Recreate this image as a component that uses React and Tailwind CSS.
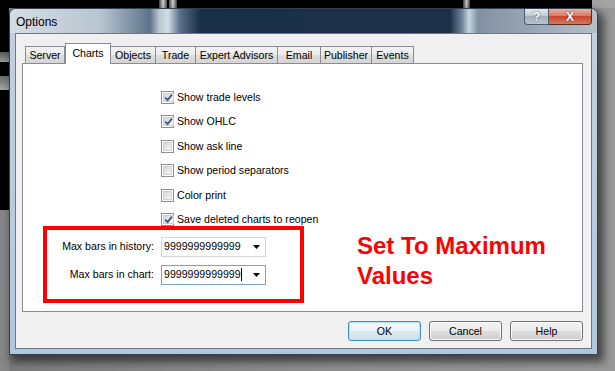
import React from "react";

const TABS = [
  { label: "Server", w: "w-[40px]" },
  { label: "Charts", w: "w-[46px]", active: true },
  { label: "Objects", w: "w-[46px]" },
  { label: "Trade", w: "w-[41px]" },
  { label: "Expert Advisors", w: "w-[83px]" },
  { label: "Email", w: "w-[44px]" },
  { label: "Publisher", w: "w-[52px]" },
  { label: "Events", w: "w-[43px]" },
];

const OPTIONS = [
  { label: "Show trade levels", checked: true },
  { label: "Show OHLC", checked: true },
  { label: "Show ask line", checked: false },
  { label: "Show period separators", checked: false },
  { label: "Color print", checked: false },
  { label: "Save deleted charts to reopen", checked: true },
];

function CheckBox({ checked }) {
  return (
    <span className="w-[13px] h-[13px] shrink-0 border border-[#8f8f8f] bg-white p-px flex">
      <span className="flex-1 flex items-center justify-center border border-[#cfcfcf] bg-[linear-gradient(135deg,#d6d6d6,#f7f7f7)]">
        {checked && (
          <svg width="9" height="9" viewBox="0 0 9 9">
            <path d="M1.2 4.6 L3.6 7 L7.9 1.6" fill="none" stroke="#3f5793" strokeWidth="1.9" />
          </svg>
        )}
      </span>
    </span>
  );
}

function Combo({ focused }) {
  return (
    <div
      className={`w-[105px] h-[20px] flex items-center bg-white border ${
        focused ? "border-[#7da2ce]" : "border-[#d5d5d5]"
      }`}
    >
      <span className="flex-1 flex items-center pl-[2px] text-[10.6px] leading-[13px] text-black">
        9999999999999
        {focused && <span className="w-px h-[13px] bg-black" />}
      </span>
      <svg className="mr-[5px]" width="7" height="4" viewBox="0 0 7 4">
        <path d="M0 0 H7 L3.5 4 Z" fill="#000" />
      </svg>
    </div>
  );
}

function DialogButton({ children, primary }) {
  return (
    <button
      className={`w-[73px] h-[20px] rounded-[3px] border text-[10.6px] text-black leading-none ${
        primary
          ? "border-[#3c8fc8] shadow-[inset_0_0_0_1px_#b5e2f8] bg-[linear-gradient(180deg,#f4f9fc_0%,#e9f3f9_50%,#dbe9f2_50%,#cfe1ec_100%)]"
          : "border-[#707070] shadow-[inset_0_0_0_1px_#fbfbfb] bg-[linear-gradient(180deg,#f2f2f2_0%,#ebebeb_50%,#dddddd_50%,#cfcfcf_100%)]"
      }`}
    >
      {children}
    </button>
  );
}

function TitleBar() {
  return (
    <div className="h-[24px] shrink-0 flex items-start bg-[linear-gradient(90deg,#d4dce4_0px,#b9c6d2_90px,#5d7289_140px,#b7c6d4_149px,#d3dde6_158px,#5a7089_170px,#1a2f48_190px,#1c3149_440px,#6f8399_452px,#c8d5e1_459px,#7f91a4_468px,#8a98a7_485px,#b4bfca_587px)]">
      <span className="pl-[6px] pt-[6px] text-[12px] leading-[14px] text-black">Options</span>
      <div className="ml-auto mr-[5px] flex">
        <div className="w-[25px] h-[16px] rounded-bl-[4px] border border-[#4d5c6c] border-t-0 bg-[linear-gradient(180deg,#e4e9ee,#bcc6d1_50%,#a3afbc_50%,#b9c4cf)] flex items-center justify-center text-[12px] font-bold text-white leading-none [text-shadow:0_0_2px_#34404c]">
          ?
        </div>
        <div className="w-[43px] h-[16px] rounded-br-[4px] border border-[#5a2a22] border-t-0 border-l-0 bg-[linear-gradient(180deg,#eab0a4,#d7735f_50%,#c7462f_50%,#d8765e)] flex items-center justify-center text-[12px] font-bold text-white leading-none [text-shadow:0_0_2px_#4a1a12]">
          X
        </div>
      </div>
    </div>
  );
}

function ChartsPanel() {
  return (
    <div className="ml-[6px] w-[561px] h-[249px] shrink-0 border border-[#898c95] bg-white flex flex-col">
      <div className="pt-[27px] pl-[138px] flex flex-col gap-[11.4px]">
        {OPTIONS.map((o) => (
          <div key={o.label} className="h-[13px] flex items-center gap-[3px]">
            <CheckBox checked={o.checked} />
            <span className="text-[10.6px] leading-[13px] text-black whitespace-nowrap">{o.label}</span>
          </div>
        ))}
      </div>
      <div className="flex items-start">
        <div className="ml-[20px] w-[261px] h-[77px] shrink-0 border-[4px] border-[#ff0000] pt-[7px] grid grid-cols-[107px_105px] content-start gap-x-[7px] gap-y-[8px] items-center">
          <span className="text-right text-[10.6px] text-black whitespace-nowrap">Max bars in history:</span>
          <Combo />
          <span className="text-right text-[10.6px] text-black whitespace-nowrap">Max bars in chart:</span>
          <Combo focused />
        </div>
        <div className="ml-[53px] mt-[5px] text-[24px] leading-[30px] font-bold text-[#ff0000]">
          Set To Maximum
          <br />
          Values
        </div>
      </div>
    </div>
  );
}

export default function App() {
  return (
    <div className="w-[615px] h-[371px] overflow-hidden flex flex-col bg-[linear-gradient(90deg,#7b7b7b,#8e8e8e_50%,#999999)] font-['Liberation_Sans',Arial,sans-serif]">
      {/* desktop behind the window */}
      <div className="h-[8px] shrink-0 flex">
        <div className="w-[159px] bg-black" />
        <div className="w-[8px] bg-[linear-gradient(90deg,#3c3c3c,#d0d0d0,#4c4c4c)]" />
        <div className="w-[2px] bg-black" />
        <div className="w-[8px] bg-[linear-gradient(90deg,#4c4c4c,#d0d0d0,#3c3c3c)]" />
        <div className="w-[286px] bg-black" />
        <div className="w-[7px] bg-[linear-gradient(90deg,#3c3c3c,#c4c4c4,#3c3c3c)]" />
        <div className="w-[122px] bg-black" />
        <div className="flex-1 bg-[#a3a3a3]" />
      </div>

      <div className="flex flex-1">
        <div className="w-[9px] shrink-0 flex flex-col">
          <div className="h-[202px] bg-black flex flex-col">
            <div className="h-[44px]" />
            <div className="h-[10px] bg-[linear-gradient(180deg,#5a5a5a,#9a9a9a)]" />
            <div className="h-[14px]" />
            <div className="h-[14px] bg-[linear-gradient(180deg,#6a6a6a,#a5a5a5)]" />
          </div>
          <div className="flex-1 bg-[#868686]" />
        </div>

        {/* Options dialog */}
        <div className="w-[589px] h-[347px] shrink-0 flex flex-col rounded-t-[7px] overflow-hidden border border-[#34414f] bg-[linear-gradient(180deg,#c3d1df,#b0c7dc)] shadow-[4px_5px_9px_2px_rgba(0,0,0,0.55)]">
          <TitleBar />
          <div className="flex-1 flex px-[5px] pb-[5px]">
            <div className="flex-1 flex flex-col border border-[#6b7886] bg-[#f0f0f0]">
              <div className="mt-[9px] ml-[9px] h-[20px] flex items-end relative z-10">
                {TABS.map((t) =>
                  t.active ? (
                    <div
                      key={t.label}
                      className={`${t.w} h-[21px] -mb-px shrink-0 border border-b-0 border-[#898c95] bg-white flex items-start justify-center pt-[3px] text-[10.6px] leading-[13px] text-black`}
                    >
                      {t.label}
                    </div>
                  ) : (
                    <div
                      key={t.label}
                      className={`${t.w} h-[17px] shrink-0 border border-b-0 border-[#898c95] -ml-px first:ml-0 bg-[linear-gradient(180deg,#f3f3f3,#ebebeb_50%,#dddddd_50%,#d5d5d5)] flex items-center justify-center pt-px text-[10.6px] leading-[13px] text-black`}
                    >
                      {t.label}
                    </div>
                  )
                )}
              </div>
              <ChartsPanel />
              <div className="mt-[9px] pr-[8px] flex justify-end gap-[8px]">
                <DialogButton primary>OK</DialogButton>
                <DialogButton>Cancel</DialogButton>
                <DialogButton>Help</DialogButton>
              </div>
            </div>
          </div>
        </div>

        <div className="flex-1" />
      </div>
    </div>
  );
}
